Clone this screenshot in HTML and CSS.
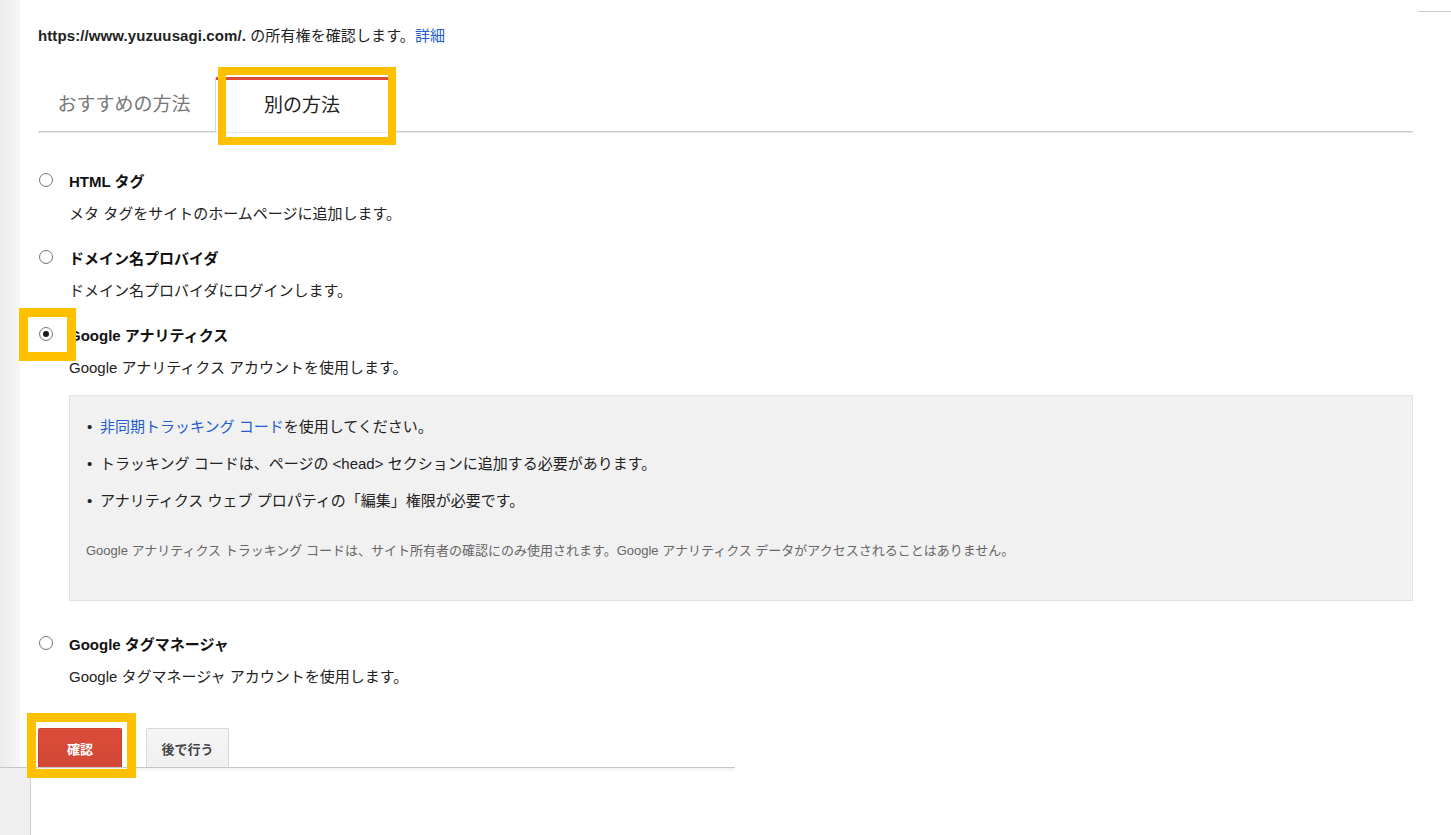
FILE: index.html
```html
<!DOCTYPE html>
<html lang="ja">
<head>
<meta charset="utf-8">
<title>所有権の確認</title>
<link rel="stylesheet" href="styles.css">
</head>
<body>
<div class="page">
  <div class="strip"></div>
  <main class="panel">
    <div class="topline"><span></span></div>
    <p class="owner"><b>https://www.yuzuusagi.com/.</b> の所有権を確認します。<a href="#">詳細</a></p>
    <div class="tabs">
      <div class="tab">おすすめの方法</div>
      <div class="tab active">別の方法</div>
    </div>
    <ul class="methods">
      <li class="method">
        <span class="radio"></span>
        <div class="method-body">
          <div class="method-title">HTML タグ</div>
          <div class="method-desc">メタ タグをサイトのホームページに追加します。</div>
        </div>
      </li>
      <li class="method">
        <span class="radio"></span>
        <div class="method-body">
          <div class="method-title">ドメイン名プロバイダ</div>
          <div class="method-desc">ドメイン名プロバイダにログインします。</div>
        </div>
      </li>
      <li class="method">
        <span class="radio on"></span>
        <div class="method-body">
          <div class="method-title">Google アナリティクス</div>
          <div class="method-desc">Google アナリティクス アカウントを使用します。</div>
          <div class="info">
            <ul class="info-list">
              <li><a href="#">非同期トラッキング コード</a>を使用してください。</li>
              <li>トラッキング コードは、ページの &lt;head&gt; セクションに追加する必要があります。</li>
              <li>アナリティクス ウェブ プロパティの「編集」権限が必要です。</li>
            </ul>
            <p class="info-note">Google アナリティクス トラッキング コードは、サイト所有者の確認にのみ使用されます。Google アナリティクス データがアクセスされることはありません。</p>
          </div>
        </div>
      </li>
      <li class="method">
        <span class="radio"></span>
        <div class="method-body">
          <div class="method-title">Google タグマネージャ</div>
          <div class="method-desc">Google タグマネージャ アカウントを使用します。</div>
        </div>
      </li>
    </ul>
    <div class="actions">
      <button class="btn btn-primary" type="button">確認</button>
      <button class="btn" type="button">後で行う</button>
    </div>
  </main>
</div>
<div class="footer">
  <div class="footer-side"></div>
  <div class="footer-frame"></div>
</div>
</body>
</html>
```

FILE: styles.css
```css
*, *::before, *::after { box-sizing: border-box; }

html, body {
  margin: 0;
  padding: 0;
  background: #fff;
}

body {
  width: 1451px;
  height: 835px;
  overflow: hidden;
  font-family: "Liberation Sans", "Noto Sans CJK JP", sans-serif;
  font-size: 15px;
  color: #222;
}

.page {
  display: flex;
  height: 767px;
}

.strip {
  flex: none;
  width: 20px;
  background: linear-gradient(to right, #ebebeb, #f7f7f7);
}

.panel {
  flex: 1;
  display: flex;
  flex-direction: column;
  padding: 0 38px 0 18px;
}

.topline {
  height: 12px;
  display: flex;
  justify-content: flex-end;
  margin-right: -38px;
}

.topline span {
  width: 33px;
  border-bottom: 1px solid #c8c8c8;
}

.owner {
  margin: 14px 0 0;
  height: 20px;
  line-height: 20px;
  font-size: 15px;
  letter-spacing: 0.1px;
}

.owner b { font-weight: 700; }

.owner a,
.info-list a {
  color: #245dcf;
  text-decoration: none;
}

/* tabs */
.tabs {
  margin-top: 31px;
  display: flex;
  height: 55px;
  border-bottom: 1px solid #cdcdcd;
  box-shadow: 0 1px 0 #e8e8e8;
}

.tab {
  width: 178px;
  height: 54px;
  display: flex;
  align-items: center;
  justify-content: center;
  padding: 0 5px 4px 0;
  font-size: 19px;
  color: #777;
  border-right: 1px solid #d6d6d6;
}

.tab.active {
  width: 173px;
  height: 55px;
  color: #222;
  background: #fff;
  border-top: 3px solid #dd4b39;
  padding: 0 0 5px;
  position: relative;
}

.tab.active::after {
  content: "";
  position: absolute;
  left: 2px;
  top: -13px;
  width: 178px;
  height: 78px;
  border: 8px solid #ffc000;
}

/* methods */
.methods {
  list-style: none;
  margin: 39px 0 0;
  padding: 0;
  display: flex;
  flex-direction: column;
  gap: 23px;
}

.method {
  display: flex;
  gap: 16px;
}

.method-body { flex: 1; }

.radio {
  flex: none;
  position: relative;
  width: 14px;
  height: 14px;
  margin: 2px 0 0 1px;
  border: 1.5px solid #777;
  border-radius: 50%;
  background: radial-gradient(circle at 50% 40%, #fff 55%, #e6e6e6 100%);
}

.radio.on::after {
  content: "";
  position: absolute;
  left: 2.5px;
  top: 2.5px;
  width: 6px;
  height: 6px;
  border-radius: 50%;
  background: #1a1a1a;
}

.radio.on::before {
  content: "";
  position: absolute;
  left: -21.5px;
  top: -20.5px;
  width: 57px;
  height: 53px;
  border: 9px solid #ffc000;
  z-index: 2;
}

.method-title {
  height: 22px;
  line-height: 22px;
  font-weight: 700;
  font-size: 15px;
  color: #111;
}

.method-desc {
  margin-top: 10px;
  height: 22px;
  line-height: 22px;
  font-size: 15px;
}

/* info box */
.info {
  margin: 16px 0 10px;
  height: 206px;
  background: #f1f1f1;
  border: 1px solid #e2e2e2;
  padding: 20px 16px 0 17px;
}

.info-list {
  list-style: none;
  margin: 0;
  padding: 0;
  display: flex;
  flex-direction: column;
  gap: 15px;
}

.info-list li {
  display: flex;
  height: 22px;
  line-height: 22px;
  font-size: 15px;
}

.info-list li::before {
  content: "•";
  flex: none;
  width: 13px;
}

.info-note {
  margin: 30px 0 0 -1px;
  height: 18px;
  line-height: 18px;
  font-size: 13px;
  color: #666;
}

/* actions */
.actions {
  margin-top: 40px;
  display: flex;
  gap: 24px;
}

.btn {
  height: 39px;
  width: 83px;
  padding: 0;
  font-family: inherit;
  font-size: 13px;
  font-weight: 700;
  color: #444;
  background: linear-gradient(#f5f5f5, #f0f0f0);
  border: 1px solid #d9d9d9;
  border-bottom: none;
  border-radius: 2px 2px 0 0;
}

.btn-primary {
  width: 84px;
  color: #fff;
  background: linear-gradient(#dd4b39, #d14836);
  border: 1px solid #c9402f;
  border-bottom: none;
  position: relative;
}

.btn-primary::after {
  content: "";
  position: absolute;
  left: -12px;
  top: -16px;
  width: 109px;
  height: 65px;
  border: 9px solid #ffc000;
}

/* bottom frame */
.footer {
  display: flex;
  width: 735px;
  height: 68px;
  border-top: 1px solid #c6c6c6;
}

.footer-side {
  flex: none;
  width: 31px;
  background: #efefef;
  border-right: 1px solid #cfcfcf;
}

.footer-frame {
  flex: 1;
  background: linear-gradient(#f0f0f0, #fff 4px);
}
```
